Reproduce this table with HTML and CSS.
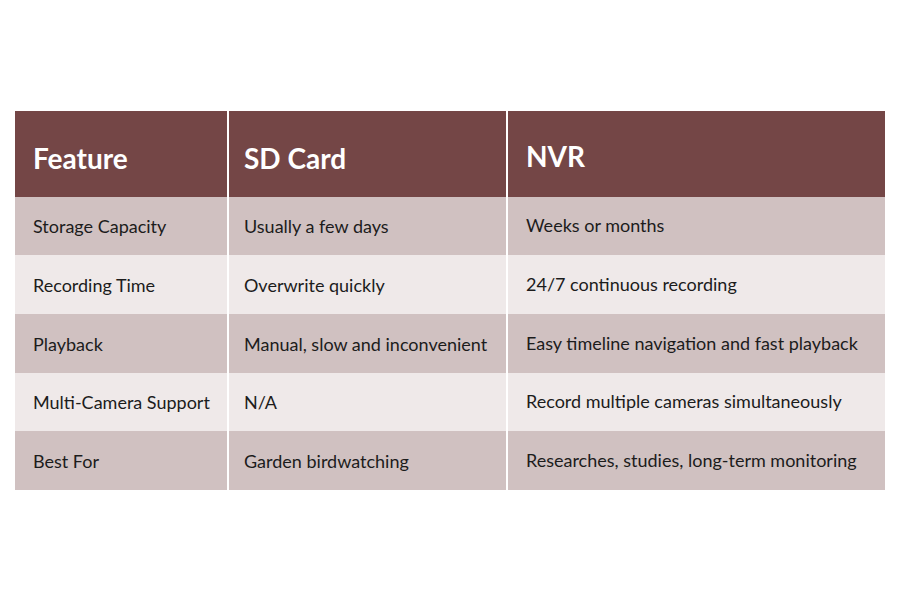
FILE: index.html
```html
<!DOCTYPE html>
<html>
<head>
<meta charset="utf-8">
<link rel="stylesheet" href="styles.css">
</head>
<body>
<div class="page">
<table class="compare">
  <colgroup>
    <col class="w1">
    <col class="w2">
    <col class="w3">
  </colgroup>
  <thead>
    <tr>
      <th class="c1">Feature</th>
      <th class="c2">SD Card</th>
      <th class="c3">NVR</th>
    </tr>
  </thead>
  <tbody>
    <tr class="odd r1">
      <td class="c1">Storage Capacity</td>
      <td class="c2">Usually a few days</td>
      <td class="c3">Weeks or months</td>
    </tr>
    <tr class="even r2">
      <td class="c1">Recording Time</td>
      <td class="c2">Overwrite quickly</td>
      <td class="c3">24/7 continuous recording</td>
    </tr>
    <tr class="odd r3">
      <td class="c1">Playback</td>
      <td class="c2">Manual, slow and inconvenient</td>
      <td class="c3">Easy timeline navigation and fast playback</td>
    </tr>
    <tr class="even r4">
      <td class="c1">Multi-Camera Support</td>
      <td class="c2">N/A</td>
      <td class="c3">Record multiple cameras simultaneously</td>
    </tr>
    <tr class="odd r5">
      <td class="c1">Best For</td>
      <td class="c2">Garden birdwatching</td>
      <td class="c3">Researches, studies, long-term monitoring</td>
    </tr>
  </tbody>
</table>
</div>
</body>
</html>
```

FILE: styles.css
```css
html, body {
  margin: 0;
  padding: 0;
  background: #ffffff;
}
.page {
  padding: 111px 15px 0 15px;
}
.compare {
  width: 870px;
  border-collapse: collapse;
  table-layout: fixed;
  font-family: Lato, "Open Sans", sans-serif;
  color: #1c1c1c;
}
.compare col.w1 { width: 213px; }
.compare col.w2 { width: 279px; }
.compare col.w3 { width: 378px; }
.compare th, .compare td {
  box-sizing: border-box;
  text-align: left;
  vertical-align: middle;
  padding: 0;
  border-left: 2px solid #ffffff;
  white-space: nowrap;
}
.compare th:first-child, .compare td:first-child {
  border-left: none;
}
.compare thead tr {
  background: #744646;
}
.compare th {
  height: 86px;
  color: #ffffff;
  font-weight: 700;
  font-size: 28px;
  padding-top: 8px;
}
.compare th.c1, .compare td.c1 { padding-left: 18px; }
.compare th.c2, .compare td.c2 { padding-left: 15px; }
.compare th.c3, .compare td.c3 { padding-left: 18px; }
.compare th.c3 { padding-top: 4px; padding-bottom: 0; }
.compare td.c3 { padding-bottom: 2px; }
.compare td {
  font-size: 18px;
  height: 59px;
}
.compare tr.r1 td, .compare tr.r4 td { height: 58px; }
.compare tr.odd { background: #d0c1c1; }
.compare tr.even { background: #efe9e9; }
```
